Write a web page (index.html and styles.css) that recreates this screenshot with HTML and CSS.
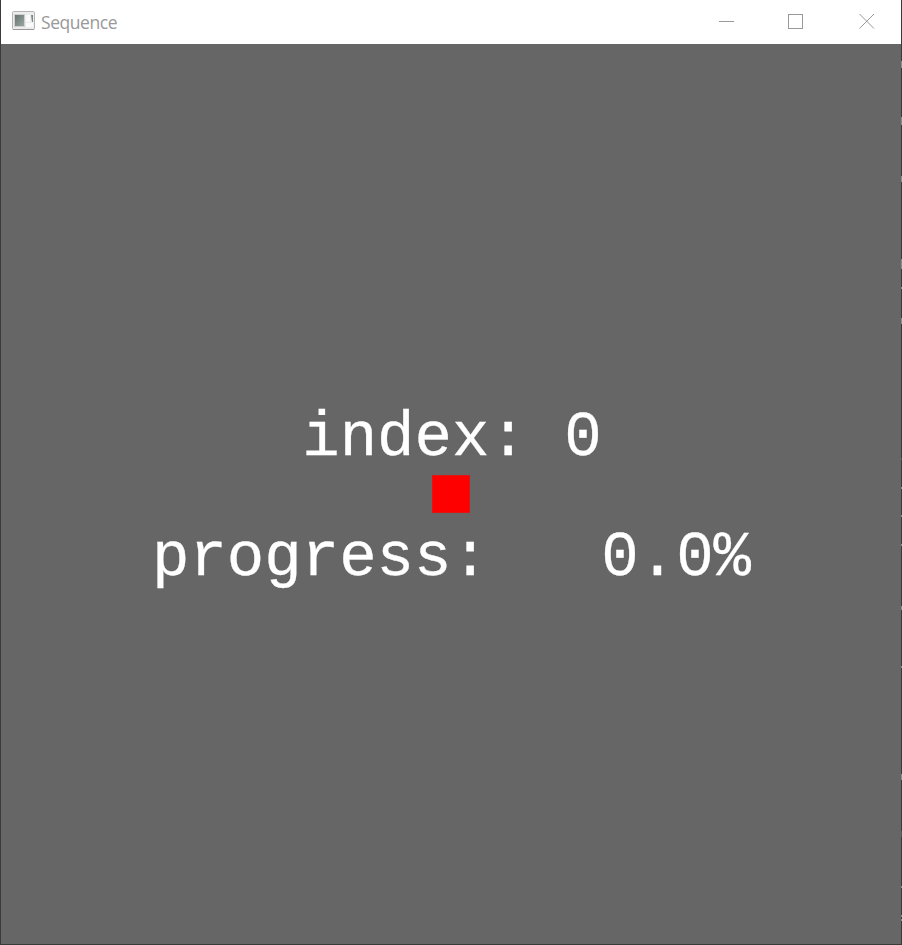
FILE: index.html
```html
<!DOCTYPE html>
<html lang="en">
<head>
<meta charset="utf-8">
<title>Sequence</title>
<link rel="stylesheet" href="styles.css">
</head>
<body>
<div class="window">
  <header class="titlebar">
    <svg class="app-icon" width="23" height="20" viewBox="0 0 23 20">
      <defs><linearGradient id="pane" x2="1" y2="1"><stop stop-color="#66706e"/><stop offset="1" stop-color="#9ba9a2"/></linearGradient></defs>
      <rect x=".5" y=".5" width="22" height="18" rx="1" fill="#ececec" stroke="#b4b4b4"/>
      <path d="M1 18.500h21" stroke="#999"/>
      <rect x="2.500" y="3.500" width="10" height="12" fill="url(#pane)" stroke="#d0d0d0"/>
      <path d="M14 4h4v7h-4zM14 12h7v4h-7z" fill="#fafafa"/>
      <path d="M19 4h2v7h-1z" fill="#7c8884"/>
    </svg>
    <h1 class="title">Sequence</h1>
    <svg class="controls" width="156" height="16" viewBox="0 0 156 16" fill="none" stroke="#999">
      <path d="M0 8.500h15" shape-rendering="crispEdges"/>
      <rect x="69.500" y="1.500" width="14" height="14" shape-rendering="crispEdges"/>
      <path d="M140.500 1l14.500 14.500M155 1l-14.500 14.500"/>
    </svg>
  </header>
  <main class="canvas">
    <p class="readout index">index: 0</p>
    <div class="marker"></div>
    <p class="readout progress">progress:   0.0%</p>
  </main>
</div>
<svg class="edge" width="1" height="945" fill="#8c8c8c">
  <path d="M0 61h1v7H0zM0 117h1v8H0zM0 176h1v6H0zM0 259h1v10H0zM0 287h1v2H0zM0 318h1v6H0zM0 487h1v2H0zM0 515h1v2H0zM0 544h1v2H0zM0 606h1v4H0zM0 666h1v2H0zM0 774h1v6H0zM0 886h1v2H0zM0 915h1v2H0zM0 919h1v2H0z"/>
  <path d="M0 458h1v2H0zM0 831h1v6H0z" fill="#555"/>
</svg>
</body>
</html>
```
FILE: styles.css
```css
* { box-sizing: border-box; }
body { display: flex; margin: 0; background: #3a3a3a; }
.window {
  flex: 1;
  height: 945px;
  display: flex;
  flex-direction: column;
  border: solid #3b3b3b;
  border-width: 0 0 1px 1px;
}
.edge { display: block; flex: none; }
.titlebar {
  height: 44px;
  flex: none;
  display: flex;
  align-items: center;
  padding: 0 26px 0 11px;
  background: #fff;
}
.app-icon { margin-top: -2px; }
.title {
  margin: 0 auto 0 6px;
  font: 17.500px/24px "Open Sans", "Noto Sans", sans-serif;
  letter-spacing: -0.45px;
  color: #999;
}
.controls { margin-top: -2px; }
.canvas {
  flex: 1;
  display: flex;
  flex-direction: column;
  align-items: center;
  padding-top: 359px;
  background: #666;
}
.readout {
  margin: 0;
  font: 62.400px/71px "Liberation Mono", monospace;
  white-space: pre;
  color: #fff;
  -webkit-text-stroke: 0.3px #fff;
}
.index { margin: 0 0 1px 2px; }
.progress { margin: 10px 0 0 1px; }
.marker {
  width: 38px;
  height: 38px;
  background: #f00;
  border: 1px solid #e21414;
}
```
